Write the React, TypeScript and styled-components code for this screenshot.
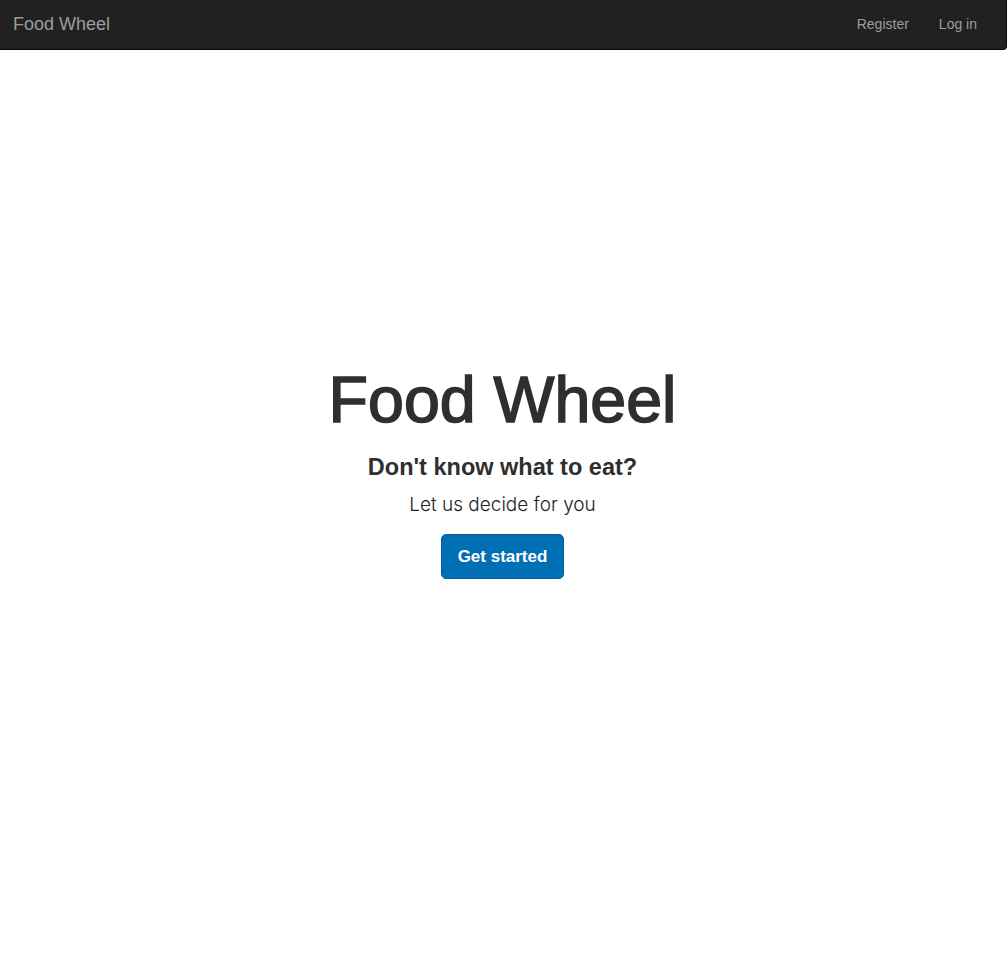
import React from "react";
import styled, { createGlobalStyle } from "styled-components";

const GlobalStyle = createGlobalStyle`
  html, body { margin: 0; padding: 0; background: #ffffff; }
  body {
    font-family: "Liberation Sans", Arial, Helvetica, sans-serif;
    color: #333333;
    min-height: 972px;
  }
  * { box-sizing: border-box; }
`;

const Page = styled.div`
  min-height: 972px;
  display: flex;
  flex-direction: column;
`;

const NavBar = styled.nav`
  height: 50px;
  margin-right: 1px;
  background: #212121;
  border-bottom: 1px solid #080808;
  border-right: 1px solid #080808;
  border-bottom-right-radius: 4px;
  display: flex;
  justify-content: space-between;
  padding: 0 14px 0 13px;
`;

const Brand = styled.a`
  font-size: 18px;
  line-height: 20px;
  padding-top: 14px;
  color: #9d9d9d;
  text-decoration: none;
`;

const NavLinks = styled.ul`
  list-style: none;
  margin: 0;
  padding: 0;
  display: flex;
`;

const NavLink = styled.a`
  display: block;
  font-size: 14px;
  line-height: 20px;
  padding: 14px 15px 0;
  color: #9d9d9d;
  text-decoration: none;
`;

const Hero = styled.main`
  display: flex;
  flex-direction: column;
  align-items: center;
  padding: 315px 3px 0 0;
  text-align: center;
`;

const Title = styled.h1`
  margin: 0;
  font-size: 64.5px;
  line-height: 70px;
  font-weight: 400;
  color: #2f2f2f;
  -webkit-text-stroke: 1.6px #2f2f2f;
`;

const Subtitle = styled.h3`
  margin: 19px 0 0;
  font-size: 23.5px;
  line-height: 26px;
  font-weight: 700;
  color: #2f2f2f;
`;

const Lead = styled.p`
  margin: 11px 0 0;
  font-family: Inter, "Liberation Sans", Arial, sans-serif;
  font-size: 19px;
  line-height: 28px;
  font-weight: 300;
  color: #222222;
`;

const PrimaryButton = styled.a`
  margin-top: 15px;
  display: inline-block;
  padding: 10px 16px;
  font-size: 17px;
  line-height: 23px;
  font-weight: 700;
  color: #ffffff;
  background: #016fb3;
  border: 1px solid #01609c;
  border-radius: 5px;
  text-decoration: none;
`;

export default function App() {
  return (
    <Page>
      <GlobalStyle />
      <NavBar>
        <Brand href="#">Food Wheel</Brand>
        <NavLinks>
          <li>
            <NavLink href="#">Register</NavLink>
          </li>
          <li>
            <NavLink href="#">Log in</NavLink>
          </li>
        </NavLinks>
      </NavBar>
      <Hero>
        <Title>Food Wheel</Title>
        <Subtitle>Don't know what to eat?</Subtitle>
        <Lead>Let us decide for you</Lead>
        <PrimaryButton href="#">Get started</PrimaryButton>
      </Hero>
    </Page>
  );
}
